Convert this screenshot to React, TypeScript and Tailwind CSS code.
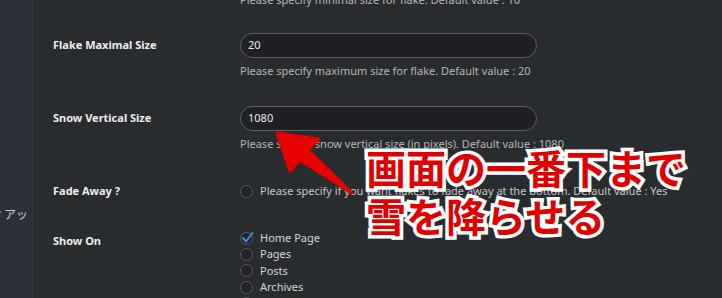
import React from "react";

const font = { fontFamily: '"Noto Sans", "Liberation Sans", sans-serif' };

function Circle({ checked = false }: { checked?: boolean }) {
  return (
    <span className="relative inline-block w-[13px] h-[13px] rounded-full border border-[#5a5d61] bg-[#222427] shrink-0">
      {checked && (
        <svg className="absolute -left-[1px] -top-[3px]" width="15" height="15" viewBox="0 0 15 15">
          <path d="M3 8 L6 11.5 L12.5 3" fill="none" stroke="#3b8fd9" strokeWidth="2" strokeLinecap="round" strokeLinejoin="round" />
        </svg>
      )}
    </span>
  );
}

function Help({ children }: { children: React.ReactNode }) {
  return <div className="text-[11px] leading-[16px] text-[#b4b6b8] whitespace-nowrap">{children}</div>;
}

function Input({ value }: { value: string }) {
  return (
    <div className="w-[297px] h-[25px] rounded-full border border-[#5e6064] bg-[#1f2023] flex items-center pl-[7px] text-[11px] text-[#eeeeee]">
      {value}
    </div>
  );
}

export default function App() {
  return (
    <div className="relative w-[722px] h-[298px] overflow-hidden flex bg-[#292c2f]" style={font}>
      <div className="w-[34px] bg-[#2c3038] shrink-0 overflow-hidden relative">
        <div className="absolute left-[-8px] top-[206px] whitespace-nowrap text-[12px] leading-[16px] text-[#c9ced6]" style={{ fontFamily: '"Noto Sans CJK JP", sans-serif' }}>
          <span className="text-[#e8743b]">ィ</span>アッ
        </div>
      </div>
      <div className="flex-1 pl-[19px] flex flex-col">
        <div className="grid grid-cols-[187px_1fr] -mt-[8px]">
          <div />
          <Help>Please specify minimal size for flake. Default value : 10</Help>
        </div>

        <div className="grid grid-cols-[187px_1fr] mt-[25px]">
          <div className="text-[11px] font-bold text-[#eeeeee] flex items-center h-[25px]">Flake Maximal Size</div>
          <div className="flex flex-col">
            <Input value="20" />
            <div className="mt-[5px]">
              <Help>Please specify maximum size for flake. Default value : 20</Help>
            </div>
          </div>
        </div>

        <div className="grid grid-cols-[187px_1fr] mt-[27px]">
          <div className="text-[11px] font-bold text-[#eeeeee] flex items-center h-[25px]">Snow Vertical Size</div>
          <div className="flex flex-col">
            <Input value="1080" />
            <div className="mt-[5px]">
              <Help>Please specify snow vertical size (in pixels). Default value : 1080</Help>
            </div>
          </div>
        </div>

        <div className="grid grid-cols-[187px_1fr] mt-[31px]">
          <div className="text-[11px] font-bold text-[#eeeeee] leading-[16px]">Fade Away ?</div>
          <div className="flex items-center gap-[7px] h-[16px]">
            <Circle />
            <span className="text-[11px] text-[#c4c6c8] whitespace-nowrap">Please specify if you want flakes to fade away at the bottom. Default value : Yes</span>
          </div>
        </div>

        <div className="grid grid-cols-[187px_1fr] mt-[31px]">
          <div className="text-[11px] font-bold text-[#eeeeee] leading-[16px] pt-[3px]">Show On</div>
          <div className="flex flex-col">
            {["Home Page", "Pages", "Posts", "Archives", "Categories"].map((t, i) => (
              <div key={t} className="flex items-center gap-[7px] h-[16.4px]">
                <Circle checked={i === 0} />
                <span className="text-[11px] text-[#d4d6d8]">{t}</span>
              </div>
            ))}
          </div>
        </div>
      </div>

      <svg className="absolute left-0 top-0 pointer-events-none" width="722" height="298" viewBox="0 0 722 298">
        <polygon
          points="277,133 319,139 308,150 352,193 300,160 290,171"
          fill="#e60000"
          stroke="#e60000"
          strokeWidth="3"
          strokeLinejoin="round"
        />
      </svg>

      <div
        className="absolute left-[366px] top-[143px] text-[40px] leading-[48px] font-bold text-[#e00000] whitespace-nowrap [paint-order:stroke_fill] [-webkit-text-stroke:7px_white]"
        style={{ fontFamily: '"Noto Sans CJK JP", sans-serif' }}
      >
        <div>画面の一番下まで</div>
        <div>雪を降らせる</div>
      </div>
    </div>
  );
}
